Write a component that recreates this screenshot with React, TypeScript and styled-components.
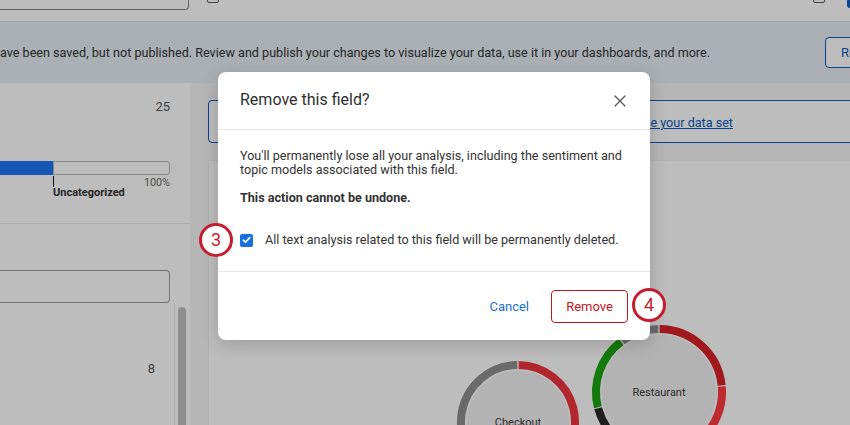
import React from "react";
import styled, { createGlobalStyle } from "styled-components";

const Global = createGlobalStyle`
  html, body { margin: 0; padding: 0; }
  body { font-family: Roboto, "Liberation Sans", Arial, sans-serif; background: #fff; color: #333; }
  #root { width: 850px; height: 425px; overflow: hidden; position: relative; }
`;

const Page = styled.div`
  position: relative;
  width: 850px;
  height: 425px;
  overflow: hidden;
  display: flex;
  flex-direction: column;
  background: #fff;
`;

/* ---------- top bar ---------- */
const TopBar = styled.div`
  height: 21px;
  flex: 0 0 21px;
  display: flex;
  align-items: flex-start;
  border-bottom: 1px solid #e4e4e4;
  background: #fff;
`;
const SearchStub = styled.div`
  width: 188px;
  height: 9px;
  border-right: 1px solid #8a8a8a;
  border-bottom: 1px solid #8a8a8a;
  border-bottom-right-radius: 4px;
`;
const MiniIcon = styled.div<{ $ml: number }>`
  margin-left: ${(p) => p.$ml}px;
  margin-top: -6px;
  width: 10px;
  height: 7px;
  border: 1.5px solid #5a5a5a;
  border-radius: 2px;
`;
const BlueEdge = styled.div`
  margin-left: auto;
  width: 3px;
  height: 8px;
  background: #0a5dc2;
  border-bottom-left-radius: 3px;
`;

/* ---------- banner ---------- */
const Banner = styled.div`
  height: 61px;
  flex: 0 0 61px;
  display: flex;
  align-items: center;
  background: #e6eef5;
`;
const BannerText = styled.div`
  flex: 0 0 825px;
  font-size: 12.6px;
  color: #333;
  white-space: nowrap;
  overflow: hidden;
`;
const OutlineButton = styled.button`
  flex: 0 0 auto;
  height: 31px;
  padding: 0 15px;
  background: #fff;
  border: 1px solid #0a5dc2;
  border-radius: 4px;
  color: #0a5dc2;
  font-family: inherit;
  font-size: 13px;
`;

/* ---------- main ---------- */
const Main = styled.div`
  flex: 1;
  display: flex;
  min-height: 0;
`;
const LeftPanel = styled.div`
  flex: 0 0 190px;
  display: flex;
  flex-direction: column;
  background: #fff;
`;
const CountRow = styled.div<{ $pt: number; $pr: number }>`
  padding-top: ${(p) => p.$pt}px;
  padding-right: ${(p) => p.$pr}px;
  text-align: right;
  font-size: 13px;
  line-height: 16px;
  color: #555;
`;
const BarRow = styled.div`
  margin-top: 46px;
  margin-right: 20px;
  display: flex;
  height: 14px;
`;
const BarFill = styled.div`
  flex: 0 0 53px;
  background: #1d74f5;
`;
const BarRest = styled.div`
  flex: 1;
  border: 1px solid #b8b8b8;
  border-radius: 0 3px 3px 0;
  background: #fff;
`;
const Legend = styled.div`
  padding-left: 53px;
  padding-right: 20px;
  margin-top: 1px;
`;
const LegendTop = styled.div`
  display: flex;
  justify-content: space-between;
  height: 11px;
`;
const Tick = styled.div`
  width: 1px;
  height: 11px;
  background: #111;
`;
const Percent = styled.span`
  font-size: 10.8px;
  line-height: 11px;
  margin-top: 1px;
  color: #666;
`;
const LegendLabel = styled.div`
  font-size: 11px;
  line-height: 12px;
  font-weight: 700;
  color: #333;
`;
const HLine = styled.div`
  margin-top: 24px;
  height: 1px;
  background: #e8e8e8;
`;
const FieldBox = styled.div`
  margin-top: 46px;
  margin-right: 20px;
  height: 31px;
  border: 1px solid #9a9a9a;
  border-left: none;
  border-radius: 0 4px 4px 0;
`;
const ListArea = styled.div`
  flex: 1;
  display: flex;
  min-height: 0;
`;
const ListContent = styled.div`
  flex: 1;
`;
const ScrollTrack = styled.div`
  flex: 0 0 13px;
  margin-right: 2px;
  border-left: 1px solid #e6e6e6;
  display: flex;
  justify-content: center;
  padding-top: 4px;
`;
const Thumb = styled.div`
  width: 8px;
  height: 200px;
  border-radius: 4px;
  background: #c0c0c0;
`;

const RightPanel = styled.div`
  flex: 1;
  display: flex;
  flex-direction: column;
  padding: 17px 0 0 18px;
  background: #f6f6f6;
  min-width: 0;
`;
const LinkBox = styled.div`
  height: 41px;
  margin-right: -20px;
  display: flex;
  align-items: center;
  border: 1px solid #0a5dc2;
  border-radius: 4px;
  background: #fff;
`;
const LinkSlot = styled.div`
  flex: 0 0 524px;
  text-align: right;
  white-space: nowrap;
  overflow: hidden;
`;
const Link = styled.a`
  color: #0a5dc2;
  font-size: 12.6px;
  text-decoration: underline;
`;
const ChartCard = styled.div`
  margin-top: 17px;
  margin-right: -20px;
  flex: 1;
  background: #fff;
  border: 1px solid #efefef;
  border-bottom: none;
  overflow: hidden;
`;
const ChartSvg = styled.svg`
  display: block;
  width: 100%;
  height: 100%;
  overflow: visible;
`;

/* ---------- modal ---------- */
const Overlay = styled.div`
  position: absolute;
  inset: 0;
  background: rgba(0, 0, 0, 0.26);
`;
const Dialog = styled.div`
  position: absolute;
  left: 218px;
  top: 72px;
  width: 432px;
  background: #fff;
  border-radius: 8px;
  box-shadow: 0 4px 18px rgba(0, 0, 0, 0.18);
  display: flex;
  flex-direction: column;
`;
const DialogHeader = styled.div`
  height: 57px;
  display: flex;
  align-items: center;
  justify-content: space-between;
  padding: 0 22px;
  border-bottom: 1px solid #e6e6e6;
`;
const Title = styled.h2`
  margin: 0;
  font-size: 16px;
  font-weight: 400;
  color: #2f2f2f;
  margin-top: -3px;
`;
const CloseButton = styled.button`
  width: 14px;
  height: 14px;
  padding: 0;
  border: none;
  background: none;
  display: flex;
  align-items: center;
  justify-content: center;
  margin-right: 1px;
`;
const DialogBody = styled.div`
  height: 122px;
  padding: 19px 22px 0;
  font-size: 12.6px;
  line-height: 14px;
  color: #333;
`;
const Para = styled.p<{ $bold?: boolean }>`
  margin: 0 0 14px;
  font-weight: ${(p) => (p.$bold ? 700 : 400)};
`;
const CheckRow = styled.label`
  margin-top: 27px;
  display: flex;
  align-items: center;
  gap: 12px;
  height: 16px;
`;
const CheckBox = styled.span`
  width: 13px;
  height: 13px;
  border-radius: 2px;
  background: #1a6fdf;
  display: flex;
  align-items: center;
  justify-content: center;
`;
const DialogFooter = styled.div`
  height: 69px;
  border-top: 1px solid #e6e6e6;
  display: flex;
  align-items: center;
  justify-content: flex-end;
  gap: 6px;
  padding: 0 22px;
  box-sizing: border-box;
`;
const TextButton = styled.button`
  height: 32px;
  padding: 0 16px;
  border: none;
  background: none;
  color: #1a6fcf;
  font-family: inherit;
  font-size: 13px;
`;
const DangerButton = styled.button`
  height: 33px;
  width: 77px;
  border: 1px solid #c4161c;
  border-radius: 4px;
  background: #fff;
  color: #c4161c;
  font-family: inherit;
  font-size: 13px;
`;
const Callout = styled.div<{ $x: number; $y: number }>`
  position: absolute;
  left: ${(p) => p.$x}px;
  top: ${(p) => p.$y}px;
  width: 28px;
  height: 28px;
  border: 3px solid #c41e2e;
  border-radius: 50%;
  background: #fff;
  display: flex;
  align-items: center;
  justify-content: center;
  color: #c41e2e;
  font-size: 18px;
  line-height: 1;
`;

/* ---------- chart helpers ---------- */
type Seg = { from: number; to: number; color: string };

const polar = (cx: number, cy: number, r: number, deg: number) => {
  const a = ((deg - 90) * Math.PI) / 180;
  return [cx + r * Math.cos(a), cy + r * Math.sin(a)];
};
const arcPath = (cx: number, cy: number, r: number, a1: number, a2: number) => {
  const [x1, y1] = polar(cx, cy, r, a1);
  const [x2, y2] = polar(cx, cy, r, a2);
  const large = a2 - a1 > 180 ? 1 : 0;
  return `M ${x1} ${y1} A ${r} ${r} 0 ${large} 1 ${x2} ${y2}`;
};

function Donut({ cx, cy, r, segs, label }: { cx: number; cy: number; r: number; segs: Seg[]; label: string }) {
  return (
    <g>
      <circle cx={cx} cy={cy} r={r - 5} fill="#f2f2f2" stroke="#ffffff" strokeWidth={1.5} />
      {segs.map((s, i) => (
        <path key={i} d={arcPath(cx, cy, r, s.from, s.to)} fill="none" stroke={s.color} strokeWidth={8} />
      ))}
      <text x={cx} y={cy + 4} textAnchor="middle" fontSize={11} fill="#3a3a3a" fontFamily="Roboto, 'Liberation Sans', sans-serif">
        {label}
      </text>
    </g>
  );
}

export default function App() {
  return (
    <>
      <Global />
      <Page>
        <TopBar>
          <SearchStub />
          <MiniIcon $ml={18} />
          <MiniIcon $ml={594} />
          <BlueEdge />
        </TopBar>
        <Banner>
          <BannerText>
            ave been saved, but not published. Review and publish your changes to visualize your data, use it in your dashboards, and more.
          </BannerText>
          <OutlineButton>Republish</OutlineButton>
        </Banner>
        <Main>
          <LeftPanel>
            <CountRow $pt={16} $pr={20}>25</CountRow>
            <BarRow>
              <BarFill />
              <BarRest />
            </BarRow>
            <Legend>
              <LegendTop>
                <Tick />
                <Percent>100%</Percent>
              </LegendTop>
              <LegendLabel>Uncategorized</LegendLabel>
            </Legend>
            <HLine />
            <FieldBox />
            <ListArea>
              <ListContent>
                <CountRow $pt={58} $pr={19}>8</CountRow>
              </ListContent>
              <ScrollTrack>
                <Thumb />
              </ScrollTrack>
            </ListArea>
          </LeftPanel>
          <RightPanel>
            <LinkBox>
              <LinkSlot>
                <Link>Learn more about how to manage your data set</Link>
              </LinkSlot>
            </LinkBox>
            <ChartCard>
              <ChartSvg>
                <Donut
                  cx={309}
                  cy={261}
                  r={57}
                  label="Checkout"
                  segs={[
                    { from: 200, to: 359.3, color: "#8f8f8f" },
                    { from: 0.7, to: 150, color: "#f0353e" },
                  ]}
                />
                <Donut
                  cx={450}
                  cy={231}
                  r={63}
                  label="Restaurant"
                  segs={[
                    { from: 0.6, to: 84, color: "#d8232b" },
                    { from: 85, to: 199, color: "#ff3a42" },
                    { from: 200, to: 255, color: "#2a2a2a" },
                    { from: 256, to: 323, color: "#1ca510" },
                    { from: 324, to: 359.4, color: "#8f8f8f" },
                  ]}
                />
              </ChartSvg>
            </ChartCard>
          </RightPanel>
        </Main>

        <Overlay />

        <Dialog role="dialog" aria-label="Remove this field?">
          <DialogHeader>
            <Title>Remove this field?</Title>
            <CloseButton aria-label="Close">
              <svg width="12" height="12" viewBox="0 0 12 12">
                <path d="M1 1 L11 11 M11 1 L1 11" stroke="#555" strokeWidth="1.3" strokeLinecap="round" />
              </svg>
            </CloseButton>
          </DialogHeader>
          <DialogBody>
            <Para>
              You'll permanently lose all your analysis, including the sentiment and topic models associated with this field.
            </Para>
            <Para $bold>This action cannot be undone.</Para>
            <CheckRow>
              <CheckBox>
                <svg width="9" height="8" viewBox="0 0 9 8">
                  <path d="M1.3 4.2 L3.5 6.2 L7.8 1.6" fill="none" stroke="#fff" strokeWidth="1.6" strokeLinecap="round" strokeLinejoin="round" />
                </svg>
              </CheckBox>
              <span>All text analysis related to this field will be permanently deleted.</span>
            </CheckRow>
          </DialogBody>
          <DialogFooter>
            <TextButton>Cancel</TextButton>
            <DangerButton>Remove</DangerButton>
          </DialogFooter>
        </Dialog>

        <Callout $x={199} $y={223}>3</Callout>
        <Callout $x={632} $y={288}>4</Callout>
      </Page>
    </>
  );
}
